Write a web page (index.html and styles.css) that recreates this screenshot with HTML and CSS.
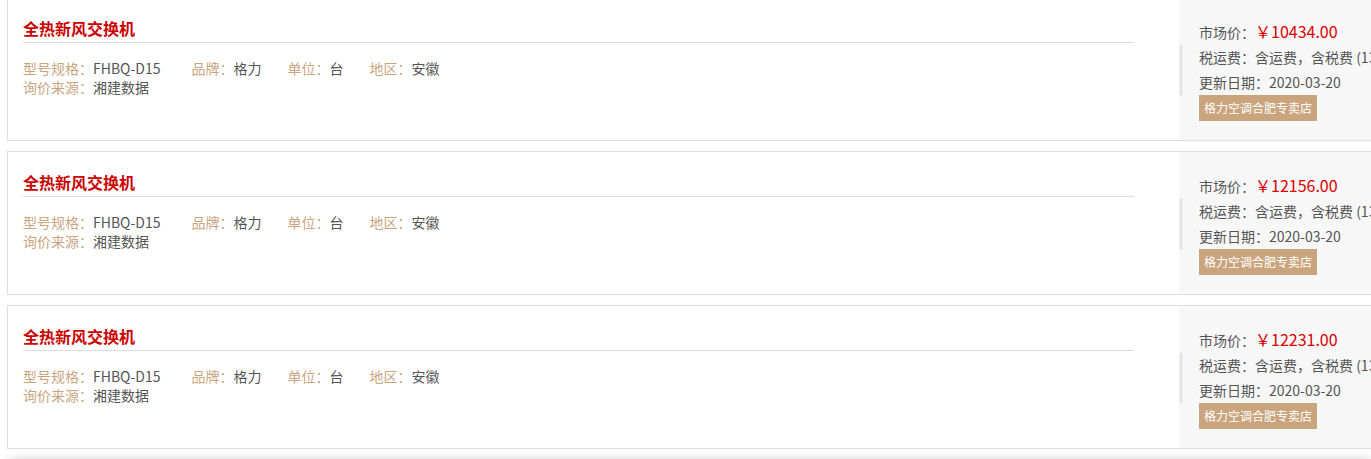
FILE: index.html
```html
<!DOCTYPE html>
<html lang="zh-CN">

<head>
    <meta charset="UTF-8">
    <meta name="viewport" content="width=device-width, initial-scale=1.0">
    <title>询价列表</title>
    <link rel="stylesheet" href="styles.css">
</head>

<body>
    <div class="list">
        <div class="card">
            <div class="card-main">
                <h3 class="card-title">全热新风交换机</h3>
                <div class="info-row">
                    <span class="item item-model"><em>型号规格：</em>FHBQ-D15</span>
                    <span class="item"><em>品牌：</em>格力</span>
                    <span class="item"><em>单位：</em>台</span>
                    <span class="item"><em>地区：</em>安徽</span>
                </div>
                <div class="info-row">
                    <span class="item"><em>询价来源：</em>湘建数据</span>
                </div>
            </div>
            <div class="card-side">
                <div class="side-bar"></div>
                <div class="side-info">
                    <p>市场价：<span class="price">￥10434.00</span></p>
                    <p>税运费：含运费，含税费 (13%)</p>
                    <p>更新日期：2020-03-20</p>
                    <span class="shop">格力空调合肥专卖店</span>
                </div>
            </div>
        </div>

        <div class="card">
            <div class="card-main">
                <h3 class="card-title">全热新风交换机</h3>
                <div class="info-row">
                    <span class="item item-model"><em>型号规格：</em>FHBQ-D15</span>
                    <span class="item"><em>品牌：</em>格力</span>
                    <span class="item"><em>单位：</em>台</span>
                    <span class="item"><em>地区：</em>安徽</span>
                </div>
                <div class="info-row">
                    <span class="item"><em>询价来源：</em>湘建数据</span>
                </div>
            </div>
            <div class="card-side">
                <div class="side-bar"></div>
                <div class="side-info">
                    <p>市场价：<span class="price">￥12156.00</span></p>
                    <p>税运费：含运费，含税费 (13%)</p>
                    <p>更新日期：2020-03-20</p>
                    <span class="shop">格力空调合肥专卖店</span>
                </div>
            </div>
        </div>

        <div class="card">
            <div class="card-main">
                <h3 class="card-title">全热新风交换机</h3>
                <div class="info-row">
                    <span class="item item-model"><em>型号规格：</em>FHBQ-D15</span>
                    <span class="item"><em>品牌：</em>格力</span>
                    <span class="item"><em>单位：</em>台</span>
                    <span class="item"><em>地区：</em>安徽</span>
                </div>
                <div class="info-row">
                    <span class="item"><em>询价来源：</em>湘建数据</span>
                </div>
            </div>
            <div class="card-side">
                <div class="side-bar"></div>
                <div class="side-info">
                    <p>市场价：<span class="price">￥12231.00</span></p>
                    <p>税运费：含运费，含税费 (13%)</p>
                    <p>更新日期：2020-03-20</p>
                    <span class="shop">格力空调合肥专卖店</span>
                </div>
            </div>
        </div>
    </div>

    <div class="footer"></div>
</body>

</html>
```

FILE: styles.css
```css
html, body {
    overflow: hidden;
}

body {
    margin: 0;
    font-family: "Microsoft YaHei", "Noto Sans CJK SC", sans-serif;
    color: #555;
    background-color: #fff;
}

.list {
    margin-top: -3px;
    padding-left: 7px;
}

.card {
    display: flex;
    width: 1420px;
    height: 142px;
    margin-bottom: 10px;
    border: 1px solid #ddd;
}

.card-main {
    flex: none;
    width: 1111px;
    padding: 0 45px 0 15px;
}

.card-title {
    margin: 0;
    padding-top: 18px;
    padding-bottom: 2px;
    font-size: 16px;
    line-height: 24px;
    font-weight: bold;
    color: #cc0000;
    border-bottom: 1px solid #ddd;
}

.info-row {
    display: flex;
    font-size: 14px;
    line-height: 19px;
}

.card-title + .info-row {
    margin-top: 16px;
}

.item {
    margin-right: 26px;
    color: #555;
}

.item-model {
    margin-right: 31px;
}

.item em {
    font-style: normal;
    color: #c9a57f;
}

.card-side {
    display: flex;
    flex: 1;
    background-color: #f7f7f7;
}

.side-bar {
    width: 2px;
    height: 50px;
    margin-top: 46px;
    border: 1px solid #ececec;
    border-radius: 2px;
    background-color: #e4e4e4;
}

.side-info {
    padding: 21px 0 0 16px;
    font-size: 14px;
    white-space: nowrap;
}

.side-info p {
    margin: 0;
    line-height: 25px;
}

.price {
    font-size: 16px;
    color: #dd0000;
}

.shop {
    display: inline-block;
    height: 26px;
    padding: 0 5px;
    font-size: 12px;
    line-height: 26px;
    color: #fff;
    background-color: #c9a47c;
}

.footer {
    height: 40px;
    margin: 3px 0 0 10px;
    background-color: #fff;
    box-shadow: 0 0 10px rgba(0, 0, 0, 0.18);
}
```
